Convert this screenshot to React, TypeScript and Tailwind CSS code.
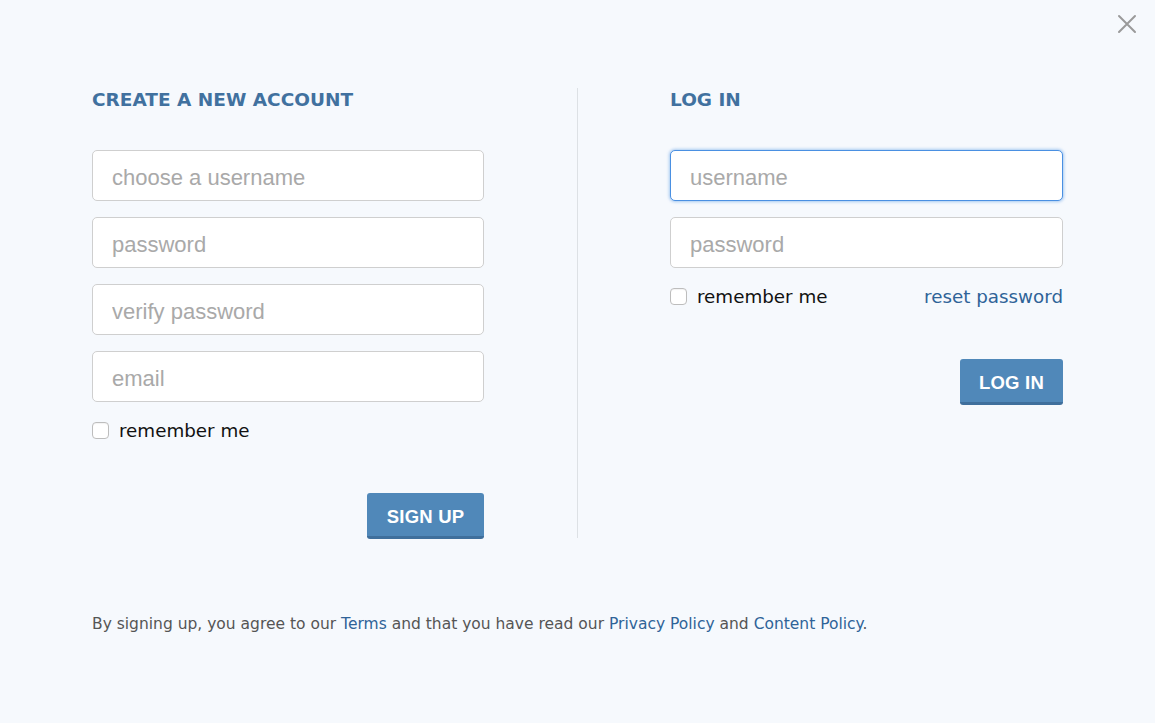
import { useState } from "react";

const verdana = "font-['DejaVu_Sans',Verdana,sans-serif]";
const helv = "font-['Liberation_Sans',Arial,sans-serif]";

const inputBase =
  "w-full h-[51px] rounded-[5px] border bg-white px-[19px] pt-[5px] text-[22px] text-gray-700 placeholder:text-[#a9a9a9] outline-none " +
  helv;

const Field = ({ placeholder, type = "text", focused = false }: { placeholder: string; type?: string; focused?: boolean }) => (
  <input
    type={type}
    placeholder={placeholder}
    className={
      inputBase +
      (focused
        ? " border-[#4a90e2] shadow-[0_0_3px_1px_rgba(74,144,226,0.45)]"
        : " border-[#cfcfcf]")
    }
  />
);

const Remember = () => {
  const [checked, setChecked] = useState(false);
  return (
    <label className={"flex items-center gap-[10px] cursor-pointer text-[18.3px] text-[#111] " + verdana}>
      <span
        onClick={() => setChecked(!checked)}
        className="w-[17px] h-[17px] rounded-[4px] border border-[#bdbdbd] bg-white shadow-[inset_0_1px_1px_rgba(0,0,0,0.05)]"
      />
      remember me
    </label>
  );
};

const Button = ({ children, width }: { children: React.ReactNode; width: string }) => (
  <button
    className={
      "h-[46px] pt-[3px] rounded-[3px] bg-[#5088b9] border-b-[3px] border-[#3f6f9c] text-white text-[18.5px] font-bold tracking-[0.2px] " +
      width +
      " " +
      helv
    }
  >
    {children}
  </button>
);

const App: React.FC = () => {
  return (
    <div className="relative w-[1155px] h-[723px] bg-[#f6f9fd] overflow-hidden">
      {/* Close */}
      <button className="absolute top-[14px] right-[18px] w-[20px] h-[20px] text-[#9a9a9a]" aria-label="Close">
        <svg viewBox="0 0 20 20" width="20" height="20" stroke="currentColor" strokeWidth="2" strokeLinecap="round">
          <path d="M2 2 L18 18 M18 2 L2 18" />
        </svg>
      </button>

      <div className="flex pl-[92px] pt-[88px]">
        {/* Sign up */}
        <div className="w-[392px] h-[451px] flex flex-col">
          <h2 className={"text-[18.5px] leading-[24px] font-bold text-[#41719f] " + verdana}>CREATE A NEW ACCOUNT</h2>
          <div className="mt-[38px] flex flex-col gap-[16px]">
            <Field placeholder="choose a username" />
            <Field placeholder="password" type="password" />
            <Field placeholder="verify password" type="password" />
            <Field placeholder="email" />
          </div>
          <div className="mt-[15px]">
            <Remember />
          </div>
          <div className="mt-[49px] flex justify-end">
            <Button width="w-[117px]">SIGN UP</Button>
          </div>
        </div>

        <div className="ml-[93px] mr-[92px] w-px h-[450px] bg-[#dde1e5]" />

        {/* Log in */}
        <div className="w-[393px] flex flex-col">
          <h2 className={"text-[18.5px] leading-[24px] font-bold text-[#41719f] " + verdana}>LOG IN</h2>
          <div className="mt-[38px] flex flex-col gap-[16px]">
            <Field placeholder="username" focused />
            <Field placeholder="password" type="password" />
          </div>
          <div className="mt-[15px] flex items-center justify-between">
            <Remember />
            <a href="#" className={"text-[18.3px] text-[#2f6398] " + verdana}>reset password</a>
          </div>
          <div className="mt-[49px] flex justify-end">
            <Button width="w-[103px]">LOG IN</Button>
          </div>
        </div>
      </div>

      {/* Footer */}
      <p className={"pl-[92px] mt-[75px] text-[15.5px] leading-[20px] text-[#555] " + verdana}>
        By signing up, you agree to our <a href="#" className="text-[#2f6398]">Terms</a> and that you have read our{" "}
        <a href="#" className="text-[#2f6398]">Privacy Policy</a> and{" "}
        <a href="#" className="text-[#2f6398]">Content Policy</a>.
      </p>
    </div>
  );
};

export default App;
